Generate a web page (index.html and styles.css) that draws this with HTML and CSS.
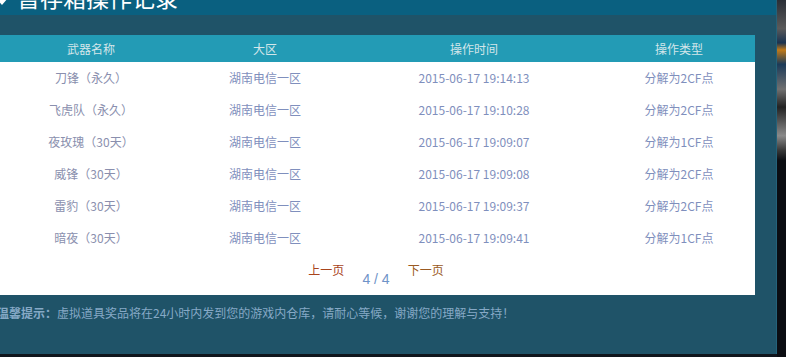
FILE: index.html
```html
<!DOCTYPE html>
<html lang="zh-CN">
<head>
<meta charset="utf-8">
<title>暂存箱操作记录</title>
<link rel="stylesheet" href="styles.css">
</head>
<body>
<div class="screen">
  <div class="panel">
    <div class="titlebar">
      <h1 class="title">
        <svg class="title-icon" width="14" height="24" viewBox="0 0 14 24"><path d="M0 4 L14 4 L14 13 L8 20 L2 13 Z M5 12 L8 15 L11 12 Z" fill="#fff" fill-rule="evenodd"/></svg>
        暂存箱操作记录
      </h1>
    </div>
    <div class="content">
      <div class="card">
        <table class="records">
          <colgroup>
            <col class="c1"><col class="c2"><col class="c3"><col class="c4">
          </colgroup>
          <thead>
            <tr><th>武器名称</th><th>大区</th><th>操作时间</th><th>操作类型</th></tr>
          </thead>
          <tbody>
            <tr><td class="name">刀锋（永久）</td><td>湖南电信一区</td><td>2015-06-17 19:14:13</td><td>分解为2CF点</td></tr>
            <tr><td class="name">飞虎队（永久）</td><td>湖南电信一区</td><td>2015-06-17 19:10:28</td><td>分解为2CF点</td></tr>
            <tr><td class="name">夜玫瑰（30天）</td><td>湖南电信一区</td><td>2015-06-17 19:09:07</td><td>分解为1CF点</td></tr>
            <tr><td class="name">威锋（30天）</td><td>湖南电信一区</td><td>2015-06-17 19:09:08</td><td>分解为2CF点</td></tr>
            <tr><td class="name">雷豹（30天）</td><td>湖南电信一区</td><td>2015-06-17 19:09:37</td><td>分解为2CF点</td></tr>
            <tr><td class="name">暗夜（30天）</td><td>湖南电信一区</td><td>2015-06-17 19:09:41</td><td>分解为1CF点</td></tr>
          </tbody>
        </table>
        <div class="pager">
          <a class="prev" href="#">上一页</a>
          <span class="pagenum">4 / 4</span>
          <a class="next" href="#">下一页</a>
        </div>
      </div>
      <p class="tip"><b>温馨提示：</b>虚拟道具奖品将在24小时内发到您的游戏内仓库，请耐心等候，谢谢您的理解与支持！</p>
    </div>
  </div>
  <div class="backdrop"></div>
</div>
</body>
</html>
```

FILE: styles.css
```css
* { box-sizing: border-box; }
html, body {
  margin: 0;
  padding: 0;
  width: 786px;
  height: 357px;
  overflow: hidden;
  background: #10151c;
  font-family: "Noto Sans CJK SC", "Noto Sans", sans-serif;
}
.screen {
  display: flex;
  width: 786px;
  height: 357px;
  align-items: flex-start;
}
.panel {
  width: 777px;
  height: 354px;
  background: #1f5368;
  border-right: 1px solid #24627a;
  display: flex;
  flex-direction: column;
  overflow: hidden;
}
.titlebar {
  height: 15px;
  background: #0a6080;
  overflow: hidden;
  flex: none;
}
.title {
  margin: -18px 0 0 -6px;
  font-size: 23px;
  font-weight: normal;
  line-height: 30px;
  color: #fff;
  display: flex;
  align-items: center;
  gap: 9px;
  white-space: nowrap;
}
.title-icon { flex: none; }
.content {
  padding-top: 20px;
  margin-left: -3px;
  flex: 1;
  display: flex;
  flex-direction: column;
}
.card {
  width: 758px;
  background: #fff;
}
.records {
  width: 758px;
  border-collapse: collapse;
  table-layout: fixed;
  font-size: 12px;
}
.c1 { width: 188px; }
.c2 { width: 160px; }
.c3 { width: 258px; }
.c4 { width: 152px; }
.records th {
  height: 27px;
  padding: 0;
  background: #239bb5;
  color: #d3e6ea;
  font-weight: normal;
  text-align: center;
  line-height: 27px;
}
.records td {
  height: 32px;
  padding: 0;
  text-align: center;
  color: #7f8fbd;
  line-height: 32px;
}
.records td.name { color: #8a8fae; }
.pager {
  height: 41px;
  display: flex;
  justify-content: center;
  align-items: flex-start;
  gap: 18px;
  padding-top: 7px;
}
.pager a {
  font-size: 12px;
  line-height: 18px;
  text-decoration: none;
}
.prev { color: #a8441c; }
.next { color: #9a5a22; }
.pagenum {
  font-family: "Liberation Sans", Arial, sans-serif;
  font-size: 14px;
  line-height: 18px;
  color: #6f93c8;
  margin-top: 9px;
}
.tip {
  margin: 9px 0 0;
  font-size: 12px;
  line-height: 18px;
  color: #86a9c6;
  white-space: nowrap;
}
.tip b { font-weight: bold; }
.backdrop {
  flex: 1;
  height: 357px;
  background:
    linear-gradient(180deg, #2a2f36 0, #5a5a5a 8%, #1a3350 12%, #c07a1a 14%, #1b3a58 18%, #707070 25%, #222 30%, #8a8a8a 38%, #3a3a3a 42%, #0b0d12 45%, #0b0d12 100%);
}
```
